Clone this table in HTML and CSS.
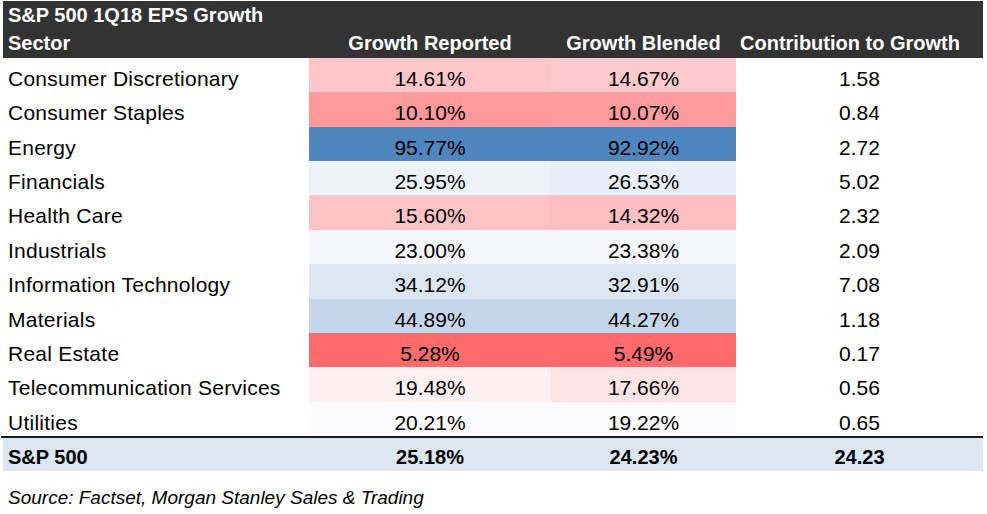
FILE: index.html
```html
<!DOCTYPE html>
<html>
<head>
<meta charset="utf-8">
<link rel="stylesheet" href="styles.css">
</head>
<body>
<div class="sheet">
  <div class="head">
    <div class="title">S&amp;P 500 1Q18 EPS Growth</div>
    <div class="row head-row">
      <div class="cell name">Sector</div>
      <div class="cell">Growth Reported</div>
      <div class="cell">Growth Blended</div>
      <div class="cell contrib-head">Contribution to Growth</div>
    </div>
  </div>
  <div class="body">
    <div class="row"><div class="cell name">Consumer Discretionary</div><div class="cell c-cd1">14.61%</div><div class="cell c-cd2">14.67%</div><div class="cell">1.58</div></div>
    <div class="row"><div class="cell name">Consumer Staples</div><div class="cell c-cs1">10.10%</div><div class="cell c-cs2">10.07%</div><div class="cell">0.84</div></div>
    <div class="row"><div class="cell name">Energy</div><div class="cell c-en">95.77%</div><div class="cell c-en">92.92%</div><div class="cell">2.72</div></div>
    <div class="row"><div class="cell name">Financials</div><div class="cell c-fi1">25.95%</div><div class="cell c-fi2">26.53%</div><div class="cell">5.02</div></div>
    <div class="row"><div class="cell name">Health Care</div><div class="cell c-hc1">15.60%</div><div class="cell c-hc2">14.32%</div><div class="cell">2.32</div></div>
    <div class="row"><div class="cell name">Industrials</div><div class="cell c-in1">23.00%</div><div class="cell c-in2">23.38%</div><div class="cell">2.09</div></div>
    <div class="row"><div class="cell name">Information Technology</div><div class="cell c-it">34.12%</div><div class="cell c-it">32.91%</div><div class="cell">7.08</div></div>
    <div class="row"><div class="cell name">Materials</div><div class="cell c-ma">44.89%</div><div class="cell c-ma">44.27%</div><div class="cell">1.18</div></div>
    <div class="row"><div class="cell name">Real Estate</div><div class="cell c-re">5.28%</div><div class="cell c-re">5.49%</div><div class="cell">0.17</div></div>
    <div class="row"><div class="cell name">Telecommunication Services</div><div class="cell c-te1">19.48%</div><div class="cell c-te2">17.66%</div><div class="cell">0.56</div></div>
    <div class="row"><div class="cell name">Utilities</div><div class="cell c-ut">20.21%</div><div class="cell c-ut">19.22%</div><div class="cell">0.65</div></div>
  </div>
  <div class="rule"></div>
  <div class="row total"><div class="cell name">S&amp;P 500</div><div class="cell">25.18%</div><div class="cell">24.23%</div><div class="cell">24.23</div></div>
  <div class="source">Source: Factset, Morgan Stanley Sales &amp; Trading</div>
</div>
</body>
</html>
```
FILE: styles.css
```css
html, body {
  margin: 0;
  padding: 0;
  background: #ffffff;
}
body {
  padding-top: 1px;
  font-family: "Liberation Sans", Arial, sans-serif;
  color: #000;
}
.sheet {
  margin-left: 3px;
  width: 980px;
}
.row {
  display: grid;
  grid-template-columns: 306px 242px 185px 247px;
}
.cell {
  text-align: center;
  white-space: nowrap;
}
.cell.name {
  text-align: left;
  padding-left: 5px;
}
.head {
  background: #333333;
  color: #ffffff;
  font-weight: bold;
  font-size: 20px;
}
.title {
  height: 28px;
  line-height: 28px;
  padding-left: 5px;
}
.head-row .cell {
  height: 29px;
  line-height: 29px;
}
.head-row .contrib-head {
  padding-right: 19px;
}
.body .cell {
  height: 34.36px;
  box-sizing: border-box;
  padding-top: 8px;
  line-height: 26.36px;
  font-size: 21px;
}
.body .cell.name {
  padding-left: 5px;
  letter-spacing: 0.25px;
}
.c-cd1 { background: #ffc6c9; }
.c-cd2 { background: #ffcacd; }
.c-cs1 { background: #ff999c; }
.c-cs2 { background: #ff9b9e; }
.c-en { background: #4f86c0; }
.c-fi1 { background: #edf2f9; }
.c-fi2 { background: #e9eff8; }
.c-hc1 { background: #ffc3c6; }
.c-hc2 { background: #ffbfc2; }
.c-in1 { background: #f4f6fb; }
.c-in2 { background: #f5f7fc; }
.c-it { background: #dce5f2; }
.c-ma { background: #c5d5ea; }
.c-re { background: #ff6a6d; }
.c-te1 { background: #fff0f1; }
.c-te2 { background: #ffe4e6; }
.c-ut { background: #fbfbfe; }
.rule {
  height: 2px;
  background: #1a1a1a;
  margin-left: -2px;
  width: 982px;
}
.total {
  background: #dce6f1;
  font-weight: bold;
  font-size: 20px;
}
.total .cell {
  height: 33px;
  box-sizing: border-box;
  padding-top: 5px;
  line-height: 28px;
}
.source {
  margin-top: 16px;
  padding-left: 5px;
  font-style: italic;
  font-size: 19px;
  line-height: 22px;
}
```
